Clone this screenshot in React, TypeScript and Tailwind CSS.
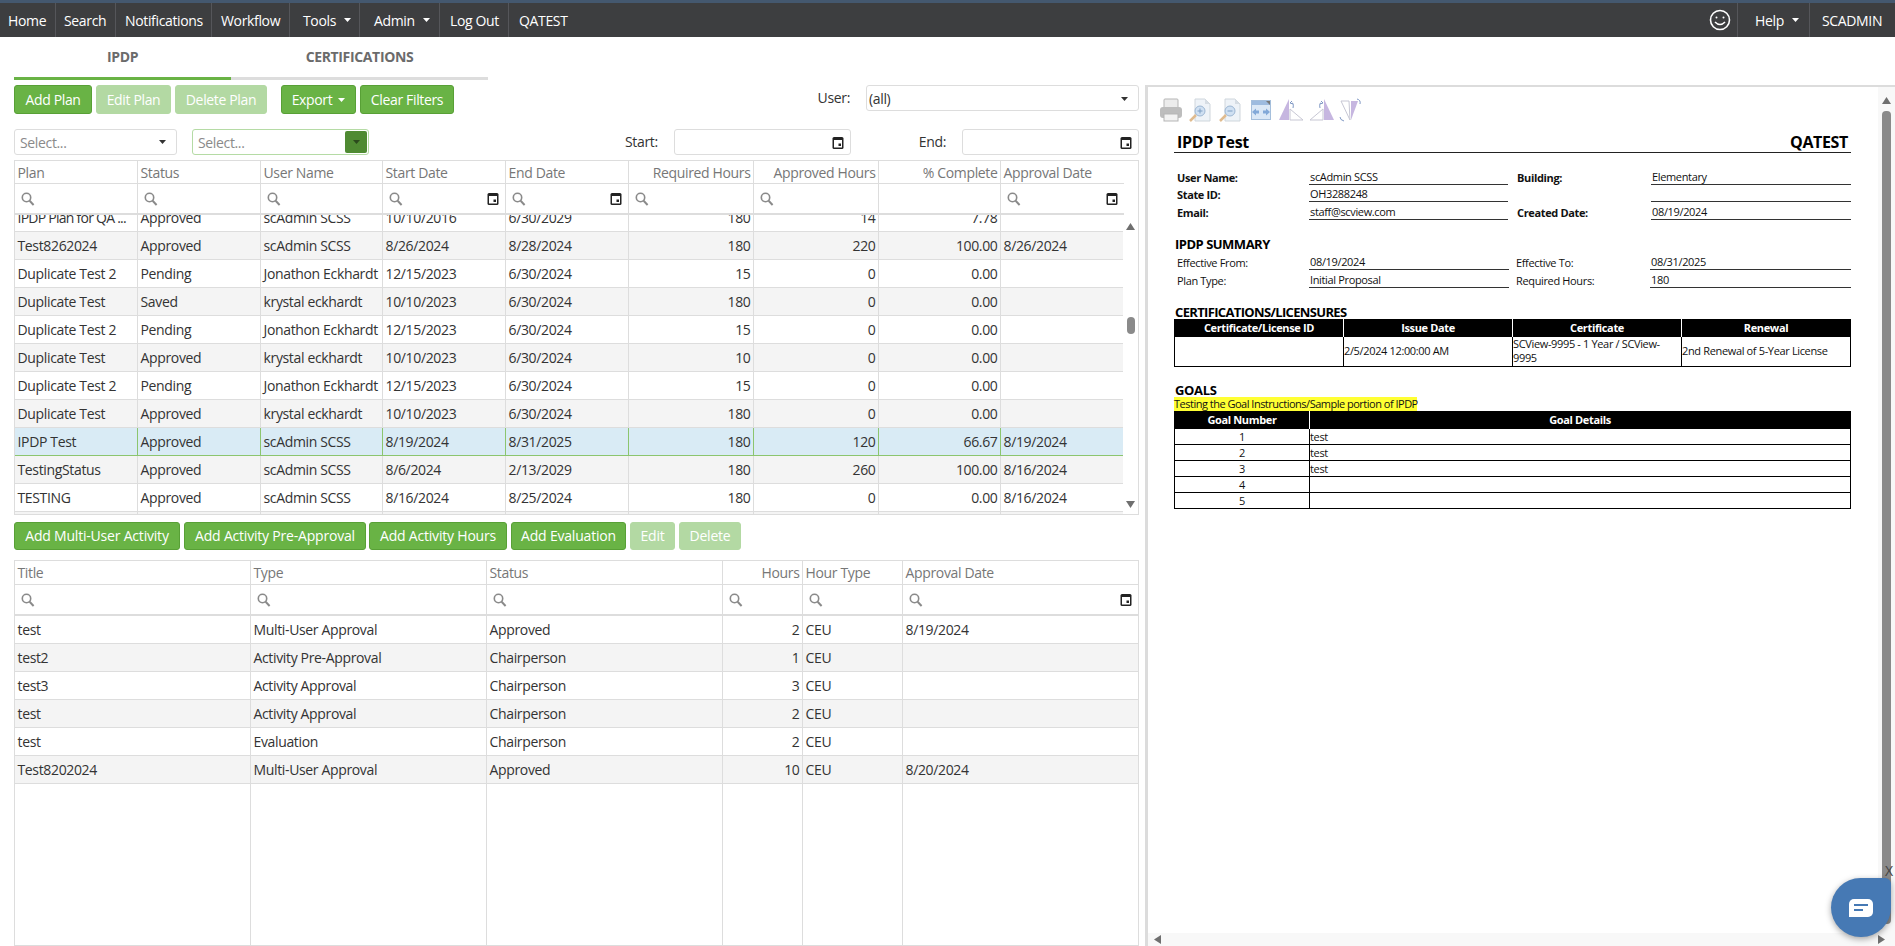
import React from "react";

const font = "font-['Open_Sans','Liberation_Sans',sans-serif]";

function Caret({ className = "", color = "#fff" }: { className?: string; color?: string }) {
  return (
    <svg width="7" height="4" viewBox="0 0 7 4" className={className}>
      <path d="M0 0h7L3.5 4z" fill={color} />
    </svg>
  );
}
function Search() {
  return (
    <svg width="14" height="14" viewBox="0 0 14 14" fill="none" stroke="#8a8a8a" strokeWidth="1.6">
      <circle cx="5.5" cy="5.5" r="4.2" />
      <path d="M8.6 8.8 12.6 13" strokeWidth="2" />
    </svg>
  );
}
function Cal() {
  return (
    <svg width="12" height="13" viewBox="0 0 12 13">
      <rect x="0.5" y="1" width="11" height="12" rx="1.5" fill="#222" />
      <rect x="2" y="4" width="8" height="7.5" fill="#fff" />
      <rect x="6.5" y="7.5" width="2.5" height="2.5" fill="#222" />
    </svg>
  );
}
function Btn({ children, off = false, className = "" }: { children: React.ReactNode; off?: boolean; className?: string }) {
  return (
    <div
      className={`flex h-full items-center justify-center rounded-[3px] border text-[14px] text-white ${
        off ? "border-[#b3d9a3] bg-[#b3d9a3]" : "border-[#58a036] bg-[#69b345]"
      } ${className}`}
    >
      {children}
    </div>
  );
}

const c1 = [123, 123, 122, 123, 123, 125, 125, 122, 123];
const h1 = ["Plan", "Status", "User Name", "Start Date", "End Date", "Required Hours", "Approved Hours", "% Complete", "Approval Date"];
const right1 = [5, 6, 7];
const rows1 = [
  ["IPDP Plan for QA ...", "Approved", "scAdmin SCSS", "10/10/2016", "6/30/2029", "180", "14", "7.78", ""],
  ["Test8262024", "Approved", "scAdmin SCSS", "8/26/2024", "8/28/2024", "180", "220", "100.00", "8/26/2024"],
  ["Duplicate Test 2", "Pending", "Jonathon Eckhardt", "12/15/2023", "6/30/2024", "15", "0", "0.00", ""],
  ["Duplicate Test", "Saved", "krystal eckhardt", "10/10/2023", "6/30/2024", "180", "0", "0.00", ""],
  ["Duplicate Test 2", "Pending", "Jonathon Eckhardt", "12/15/2023", "6/30/2024", "15", "0", "0.00", ""],
  ["Duplicate Test", "Approved", "krystal eckhardt", "10/10/2023", "6/30/2024", "10", "0", "0.00", ""],
  ["Duplicate Test 2", "Pending", "Jonathon Eckhardt", "12/15/2023", "6/30/2024", "15", "0", "0.00", ""],
  ["Duplicate Test", "Approved", "krystal eckhardt", "10/10/2023", "6/30/2024", "180", "0", "0.00", ""],
  ["IPDP Test", "Approved", "scAdmin SCSS", "8/19/2024", "8/31/2025", "180", "120", "66.67", "8/19/2024"],
  ["TestingStatus", "Approved", "scAdmin SCSS", "8/6/2024", "2/13/2029", "180", "260", "100.00", "8/16/2024"],
  ["TESTING", "Approved", "scAdmin SCSS", "8/16/2024", "8/25/2024", "180", "0", "0.00", "8/16/2024"],
  ["", "", "", "", "", "", "", "", ""],
];
const c2 = [236, 236, 236, 80, 100, 235];
const h2 = ["Title", "Type", "Status", "Hours", "Hour Type", "Approval Date"];
const rows2 = [
  ["test", "Multi-User Approval", "Approved", "2", "CEU", "8/19/2024"],
  ["test2", "Activity Pre-Approval", "Chairperson", "1", "CEU", ""],
  ["test3", "Activity Approval", "Chairperson", "3", "CEU", ""],
  ["test", "Activity Approval", "Chairperson", "2", "CEU", ""],
  ["test", "Evaluation", "Chairperson", "2", "CEU", ""],
  ["Test8202024", "Multi-User Approval", "Approved", "10", "CEU", "8/20/2024"],
];

function Cols({ w }: { w: number[] }) {
  return (
    <colgroup>
      {w.map((x, i) => (
        <col key={i} style={{ width: x }} />
      ))}
    </colgroup>
  );
}

function Head({ w, h, right, noSearch, cal, top }: { w: number[]; h: string[]; right: number[]; noSearch: number[]; cal: number[]; top: string }) {
  return (
    <table className="table-fixed border-separate border-spacing-0" style={{ width: w.reduce((a, b) => a + b, 0) }}>
      <Cols w={w} />
      <thead>
        <tr>
          {h.map((t, i) => (
            <th
              key={t}
              className={`${top} truncate border-b border-[#ddd] pl-[2.5px] pr-[2.5px] text-[14px] font-normal text-[#777] ${
                i < w.length - 1 ? "border-r" : ""
              } ${right.includes(i) ? "text-right" : "text-left"}`}
            >
              {t}
            </th>
          ))}
        </tr>
        <tr>
          {h.map((t, i) => (
            <th key={t} className={`h-[31px] border-b-[2px] border-[#ddd] p-0 ${i < w.length - 1 ? "border-r" : ""}`}>
              <div className="flex items-center justify-between pl-[6px] pr-[6px]">
                {noSearch.includes(i) ? <span /> : <Search />}
                {cal.includes(i) ? <Cal /> : null}
              </div>
            </th>
          ))}
        </tr>
      </thead>
    </table>
  );
}

function Rows({ w, rows, right, selected }: { w: number[]; rows: string[][]; right: number[]; selected?: number }) {
  return (
    <>
      {rows.map((r, ri) => {
        const sel = ri === selected;
        return (
          <tr key={ri} className={sel ? "bg-[#d9ebf5]" : ri % 2 ? "bg-[#f4f4f4]" : "bg-white"}>
            {r.map((t, i) => (
              <td
                key={i}
                className={`h-[28px] overflow-hidden whitespace-nowrap border-b pb-[1px] pl-[2.5px] pr-[2.5px] pt-0 text-[14px] text-[#333] ${
                  sel ? "border-[#8cc56e]" : "border-[#ddd]"
                } ${i < w.length - 1 ? (sel ? "border-r border-r-[#8cc56e]" : "border-r") : ""} ${right.includes(i) ? "text-right" : "text-left"} ${
                  t.endsWith("...") ? "tracking-[-0.75px]" : ""
                }`}
              >
                {t}
              </td>
            ))}
          </tr>
        );
      })}
    </>
  );
}

function Arrow({ up = false }: { up?: boolean }) {
  return (
    <svg width="9" height="7" viewBox="0 0 9 7">
      <path d={up ? "M4.5 0 9 7H0z" : "M0 0h9L4.5 7z"} fill="#6f6f6f" />
    </svg>
  );
}

function Select({ w, green = false }: { w: string; green?: boolean }) {
  return (
    <div className={`flex h-full items-center justify-between rounded-[3px] border pl-[5px] text-[14px] text-[#8a8a8a] ${green ? "border-[#b5dba5] pr-[1px]" : "border-[#ddd] pr-[10px]"} ${w}`}>
      Select...
      {green ? (
        <div className="flex h-[22px] w-[22px] items-center justify-center rounded-[2px] bg-[#4f8a32]">
          <Caret color="#2b4a1c" />
        </div>
      ) : (
        <Caret color="#333" />
      )}
    </div>
  );
}

function DateBox({ w }: { w: string }) {
  return (
    <div className={`flex h-full items-center justify-end rounded-[3px] border border-[#ddd] pr-[6px] ${w}`}>
      <Cal />
    </div>
  );
}

function ToolIcons() {
  return (
    <div className="flex h-[24px] items-center">
      <svg width="24" height="24" viewBox="0 0 24 24" className="ml-[11px]">
        <rect x="5" y="1" width="14" height="9" rx="1" fill="#ececec" stroke="#b5b5b5" />
        <rect x="1" y="9" width="22" height="11" rx="3" fill="#bdbdbd" />
        <rect x="5" y="16" width="14" height="7" fill="#f2f2f2" stroke="#b5b5b5" />
      </svg>
      <svg width="22" height="24" viewBox="0 0 22 24" className="ml-[6px]">
        <path d="M6 1h10l5 5v17H6z" fill="#eef3f8" stroke="#cfd6dc" />
        <path d="M16 1v5h5z" fill="#d6dde4" />
        <circle cx="11" cy="13" r="5" fill="#cfe0f2" stroke="#9db7d3" />
        <path d="M8.5 13h5M11 10.5v5" stroke="#7f9fc4" />
        <path d="M7 17 1 23" stroke="#e0bb8e" strokeWidth="2.5" />
      </svg>
      <svg width="22" height="24" viewBox="0 0 22 24" className="ml-[8px]">
        <path d="M6 1h10l5 5v17H6z" fill="#eef3f8" stroke="#cfd6dc" />
        <path d="M16 1v5h5z" fill="#d6dde4" />
        <circle cx="11" cy="13" r="5" fill="#cfe0f2" stroke="#9db7d3" />
        <path d="M8.5 13h5" stroke="#7f9fc4" />
        <path d="M7 17 1 23" stroke="#e0bb8e" strokeWidth="2.5" />
      </svg>
      <svg width="20" height="20" viewBox="0 0 20 20" className="ml-[10px]">
        <rect x="0.5" y="0.5" width="19" height="19" fill="#dbe8f6" stroke="#a5bfdc" />
        <rect x="1" y="1" width="18" height="4" fill="#9dbbdf" />
        <path d="M15 1h4v4z" fill="#777" />
        <path d="M1 12l4-3.5v2h3v3H5v2zM19 12l-4-3.5v2h-3v3h3v2z" fill="#83a9d8" />
      </svg>
      <svg width="25" height="22" viewBox="0 0 25 22" className="ml-[8px]">
        <path d="M10 0v21H0z" fill="#c6b6e0" />
        <path d="M11 10v11h13z" fill="#fff" stroke="#c7c7d4" />
        <path d="M14 9q1-5 -1-5M13 2l-2 2 3 1" stroke="#7f98c4" fill="none" />
      </svg>
      <svg width="25" height="22" viewBox="0 0 25 22" className="ml-[5px]">
        <path d="M15 0v21h10z" fill="#c6b6e0" />
        <path d="M14 10v11H1z" fill="#fff" stroke="#c7c7d4" />
        <path d="M11 9q-1-5 1-5M12 2l2 2-3 1" stroke="#7f98c4" fill="none" />
      </svg>
      <svg width="24" height="24" viewBox="0 0 24 24" className="ml-[5px]">
        <path d="M2 3h8l1 19z" fill="#fff" stroke="#c7c7d4" />
        <path d="M12 3h7l-7 19z" fill="#c6b6e0" />
        <path d="M18 1q4 1 3 5M1 19q0 3 4 4" stroke="#7f98c4" fill="none" />
      </svg>
    </div>
  );
}

function Field({ label, value, h, bold = true, pl = "pl-[3px]" }: { label: string; value: string; h: string; bold?: boolean; pl?: string }) {
  return (
    <>
      <div className={`flex items-end ${pl} ${h} ${bold ? "font-bold" : ""}`}>{label}</div>
      <div className={`flex items-end border-b border-[#333] pl-[1px] ${h}`}>{value}</div>
    </>
  );
}

export default function App() {
  return (
    <div className={`relative flex h-[946px] w-[1895px] flex-col overflow-hidden bg-white tracking-[-0.35px] ${font}`}>
      {/* nav */}
      <div className="flex h-[37px] shrink-0 items-center border-t-[3px] border-[#44586f] bg-[#3d3e40] text-[14px] text-white">
        <div className="flex h-full w-[56px] items-center border-r border-[#55565a] pl-[8px]">Home</div>
        <div className="flex h-full w-[60px] items-center border-r border-[#55565a] pl-[8px]">Search</div>
        <div className="flex h-full w-[96px] items-center border-r border-[#55565a] pl-[9px]">Notifications</div>
        <div className="flex h-full w-[78px] items-center border-r border-[#55565a] pl-[9px]">Workflow</div>
        <div className="flex h-full w-[70px] items-center gap-[8px] border-r border-[#55565a] pl-[13px]">
          Tools <Caret />
        </div>
        <div className="flex h-full w-[80px] items-center gap-[8px] border-r border-[#55565a] pl-[14px]">
          Admin <Caret />
        </div>
        <div className="flex h-full w-[69px] items-center border-r border-[#55565a] pl-[10px]">Log Out</div>
        <div className="flex h-full items-center pl-[10px] pt-[1px]">QATEST</div>
        <svg width="22" height="22" viewBox="0 0 22 22" fill="none" stroke="#fff" strokeWidth="1.6" className="ml-auto mr-[6px]">
          <circle cx="11" cy="11" r="9.5" />
          <circle cx="7.5" cy="8.5" r="1" fill="#fff" stroke="none" />
          <circle cx="14.5" cy="8.5" r="1" fill="#fff" stroke="none" />
          <path d="M6 13q5 5 10 0" />
        </svg>
        <div className="flex h-full items-center gap-[8px] border-x border-[#55565a] pl-[17px] pr-[10px]">
          Help <Caret />
        </div>
        <div className="flex h-full w-[85px] items-center pl-[12px]">SCADMIN</div>
      </div>

      <div className="flex min-h-0 flex-1">
        {/* left */}
        <div className="flex w-[1145px] shrink-0 flex-col pl-[14px] pr-[6px]">
          <div className="flex h-[43px] w-[474px] text-[14px] font-bold text-[#6b6b6b]">
            <div className="flex w-[217px] items-center justify-center border-b-[3px] border-[#69b345] pb-[2px]">IPDP</div>
            <div className="flex w-[257px] items-center justify-center border-b-[3px] border-[#ddd] pb-[2px]">CERTIFICATIONS</div>
          </div>

          <div className="mt-[5px] flex h-[29px] items-start">
            <Btn className="w-[78px]">Add Plan</Btn>
            <Btn off className="ml-[4px] w-[75px]">Edit Plan</Btn>
            <Btn off className="ml-[4px] w-[92px]">Delete Plan</Btn>
            <Btn className="ml-[14px] w-[75px] gap-[6px]">
              Export <Caret />
            </Btn>
            <Btn className="ml-[4px] w-[94px]">Clear Filters</Btn>
            <span className="ml-auto mr-[16px] mt-[2px] text-[14px] text-[#333]">User:</span>
            <div className="flex h-[26px] w-[273px] items-center justify-between rounded-[3px] border border-[#ddd] pl-[2px] pr-[10px] pt-[1px] text-[14px] text-[#333]">
              (all) <Caret color="#333" />
            </div>
          </div>

          <div className="mt-[15px] flex h-[26px] items-center text-[14px] text-[#333]">
            <Select w="w-[163px]" />
            <Select w="ml-[15px] w-[177px]" green />
            <span className="mb-[2px] ml-auto mr-[16px]">Start:</span>
            <DateBox w="w-[177px]" />
            <span className="mb-[2px] ml-[68px] mr-[16px]">End:</span>
            <DateBox w="w-[177px]" />
          </div>

          {/* grid 1 */}
          <div className="relative mt-[5px] h-[355px] shrink-0 overflow-hidden border border-[#ddd]">
            <Head w={c1} h={h1} right={right1} noSearch={[7]} cal={[3, 4, 8]} top="h-[23px]" />
            <div className="flex h-[300px]">
              <div className="h-full w-[1109px] overflow-hidden">
                <table className="-mt-[11px] table-fixed border-separate border-spacing-0" style={{ width: 1109 }}>
                  <Cols w={c1} />
                  <tbody>
                    <Rows w={c1} rows={rows1} right={right1} selected={8} />
                  </tbody>
                </table>
              </div>
              <div className="flex h-full w-[15px] flex-col items-center pt-[8px]">
                <Arrow up />
                <div className="ml-[1px] mt-[87px] h-[17px] w-[8px] rounded-[4px] bg-[#8a8a8a]" />
                <div className="mt-auto pb-[7px]">
                  <Arrow />
                </div>
              </div>
            </div>
          </div>

          <div className="mt-[7px] flex h-[28px] gap-[4px] tracking-[-0.2px]">
            <Btn className="w-[166px] pb-[1px]">Add Multi-User Activity</Btn>
            <Btn className="w-[182px] pb-[1px]">Add Activity Pre-Approval</Btn>
            <Btn className="-ml-[1px] w-[138px] pb-[1px]">Add Activity Hours</Btn>
            <Btn className="w-[115px] pb-[1px]">Add Evaluation</Btn>
            <Btn off className="w-[45px] pb-[1px]">Edit</Btn>
            <Btn off className="w-[62px] pb-[1px]">Delete</Btn>
          </div>

          {/* grid 2 */}
          <div className="mt-[10px] min-h-0 flex-1 overflow-hidden border border-[#ddd]">
            <Head w={c2} h={h2} right={[3]} noSearch={[]} cal={[5]} top="h-[24px]" />
            <table className="table-fixed border-separate border-spacing-0" style={{ width: 1123 }}>
              <Cols w={c2} />
              <tbody>
                <Rows w={c2} rows={rows2} right={[3]} />
                <tr>
                  {c2.map((_, i) => (
                    <td key={i} className={`h-[200px] border-[#ddd] ${i < c2.length - 1 ? "border-r" : ""}`} />
                  ))}
                </tr>
              </tbody>
            </table>
          </div>
        </div>

        {/* right */}
        <div className="mt-[48px] flex min-w-0 flex-1 flex-col border-l-[3px] border-t-[2px] border-[#dcdcdc]">
          <div className="flex min-h-0 flex-1">
            <div className="min-w-0 flex-1 pt-[11px] text-[11px] leading-[14px] text-[#111]">
              <ToolIcons />
              <div className="ml-[26px] w-[677px]">
                <div className="mt-[10px] flex h-[21px] items-center justify-between border-b border-[#222] px-[3px] text-[16px] font-bold text-black">
                  <span>IPDP Test</span>
                  <span>QATEST</span>
                </div>
                <div className="mt-[15px] grid grid-cols-[135px_199px_143px_200px]">
                  <Field label="User Name:" value="scAdmin SCSS" h="h-[17px]" />
                  <Field label="Building:" value="Elementary" h="h-[17px]" pl="pl-[9px]" />
                  <Field label="State ID:" value="OH3288248" h="h-[17px]" />
                  <Field label="" value="" h="h-[17px]" />
                  <Field label="Email:" value="staff@scview.com" h="h-[18px]" />
                  <Field label="Created Date:" value="08/19/2024" h="h-[18px]" pl="pl-[9px]" />
                </div>
                <div className="mt-[15px] h-[18px] pl-[1px] text-[13px] font-bold leading-[18px] tracking-[-0.5px] text-black">IPDP SUMMARY</div>
                <div className="grid grid-cols-[135px_200px_141px_201px]">
                  <Field label="Effective From:" value="08/19/2024" h="h-[17px]" bold={false} />
                  <Field label="Effective To:" value="08/31/2025" h="h-[17px]" bold={false} pl="pl-[7px]" />
                  <Field label="Plan Type:" value="Initial Proposal" h="h-[18px]" bold={false} />
                  <Field label="Required Hours:" value="180" h="h-[18px]" bold={false} pl="pl-[7px]" />
                </div>
                <div className="mt-[16px] h-[15px] pl-[1px] text-[13px] font-bold leading-[16px] tracking-[-0.65px] text-black">CERTIFICATIONS/LICENSURES</div>
                <table className="w-full table-fixed border-collapse border border-black">
                  <tbody>
                    <tr className="h-[17px] bg-black text-center font-bold text-white">
                      <td className="border-r border-white">Certificate/License ID</td>
                      <td className="border-r border-white">Issue Date</td>
                      <td className="border-r border-white">Certificate</td>
                      <td>Renewal</td>
                    </tr>
                    <tr className="h-[30px]">
                      <td className="border-r border-black" />
                      <td className="border-r border-black">2/5/2024 12:00:00 AM</td>
                      <td className="border-r border-black">SCView-9995 - 1 Year / SCView-9995</td>
                      <td>2nd Renewal of 5-Year License</td>
                    </tr>
                  </tbody>
                </table>
                <div className="mt-[15px] h-[15px] pl-[1px] text-[13px] font-bold leading-[16px] text-black">GOALS</div>
                <div className="flex h-[14px] w-[243px] items-center whitespace-nowrap bg-[#ffff33] tracking-[-0.5px]">Testing the Goal Instructions/Sample portion of IPDP</div>
                <table className="w-full table-fixed border-collapse border border-black">
                  <colgroup>
                    <col style={{ width: 135 }} />
                    <col />
                  </colgroup>
                  <tbody>
                    <tr className="h-[17px] bg-black text-center font-bold text-white">
                      <td className="border-r border-white">Goal Number</td>
                      <td>Goal Details</td>
                    </tr>
                    {["test", "test", "test", "", ""].map((t, i) => (
                      <tr key={i} className="h-[16px] border-t border-black">
                        <td className="border-r border-black text-center">{i + 1}</td>
                        <td>{t}</td>
                      </tr>
                    ))}
                  </tbody>
                </table>
              </div>
            </div>
            <div className="flex w-[17px] shrink-0 flex-col items-center bg-[#f8f8f8] pt-[10px]">
              <Arrow up />
              <div className="mt-[7px] h-[813px] w-[9px] rounded-[4px] bg-[#8a8a8a]" />
            </div>
          </div>
          <div className="flex h-[13px] shrink-0 items-center justify-between bg-[#f8f8f8] pl-[6px] pr-[10px]">
            <svg width="7" height="9" viewBox="0 0 7 9"><path d="M7 0v9L0 4.5z" fill="#6f6f6f" /></svg>
            <svg width="7" height="9" viewBox="0 0 7 9"><path d="M0 0v9l7-4.5z" fill="#6f6f6f" /></svg>
          </div>
        </div>
      </div>

      {/* chat widget */}
      <div className="absolute left-[1885px] top-[860px] text-[14px] text-[#444]">X</div>
      <div className="absolute left-[1831px] top-[878px] flex h-[59px] w-[60px] items-center justify-center rounded-[30px] rounded-tr-[6px] bg-[#4679b4] shadow-[0_2px_6px_rgba(0,0,0,0.35)]">
        <svg width="24" height="18" viewBox="0 0 24 18">
          <path d="M5 0h14a5 5 0 0 1 5 5v8a5 5 0 0 1-5 5H0V5a5 5 0 0 1 5-5z" fill="#fff" />
          <path d="M5 6h14" stroke="#4679b4" strokeWidth="2" />
          <path d="M5 11h9" stroke="#4679b4" strokeWidth="2" />
        </svg>
      </div>
    </div>
  );
}
